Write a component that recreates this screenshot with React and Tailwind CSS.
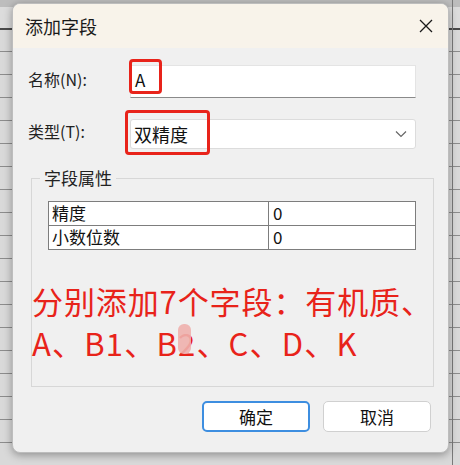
import React from 'react';

const font = { fontFamily: '"Noto Sans CJK SC", "Noto Sans", sans-serif' };

const SheetRows = () => {
  const rows = Array.from({ length: 19 });
  return (
    <div className="absolute inset-0 flex flex-col">
      <div className="h-[8px] bg-[#bdbdbd]" />
      <div className="h-[22px] bg-[#dcdcdc]" />
      {rows.map((_, i) => (
        <div
          key={i}
          className={`h-[23px] shrink-0 bg-[#d9d9d9] border-t ${i === 0 ? 'border-t-2 border-[#4a4a4a]' : 'border-[#8c8c8c]'}`}
        />
      ))}
    </div>
  );
};

const App = () => {
  return (
    <div className="relative w-[460px] h-[465px] overflow-hidden bg-[#c9c9c9]" style={font}>
      <SheetRows />
      <div className="absolute right-[7px] top-0 bottom-0 w-px bg-[#7a7a7a]" />

      {/* dialog window */}
      <div className="absolute left-[12px] top-[3px] w-[437px] h-[450px] flex flex-col rounded-[8px] overflow-hidden bg-[#f0f0f0] shadow-[0_2px_8px_rgba(0,0,0,0.35)] border border-[#bdbdbd]">
        <div className="h-[44px] shrink-0 flex items-center justify-between bg-[#f8f3ea] pl-[12px] pr-[14px]">
          <span className="text-[18px] text-[#1a1a1a]">添加字段</span>
          <svg width="16" height="16" viewBox="0 0 16 16" className="text-[#1a1a1a]">
            <path d="M2 2 L14 14 M14 2 L2 14" stroke="currentColor" strokeWidth="1.3" fill="none" />
          </svg>
        </div>

        <div className="flex flex-col pl-[15px] pr-[20px] pt-[17px]">
          <div className="flex items-center">
            <span className="w-[102px] text-[16px] text-[#222] -mt-[6px]">名称(N):</span>
            <div className="relative w-[286px] h-[33px] bg-white border border-[#e4e4e4] border-b-[#8a8a8a] flex items-center pl-[4px] pb-[4px]">
              <span className="text-[17px] text-[#111]">A</span>
              <div className="absolute left-[-2px] top-[-7px] w-[33px] h-[35px] border-[3px] border-[#e8231a] rounded-[4px]" />
            </div>
          </div>

          <div className="flex items-center mt-[21px]">
            <span className="w-[102px] text-[16px] text-[#222] -mt-[6px]">类型(T):</span>
            <div className="relative w-[286px] h-[30px] bg-white border border-[#dcdcdc] rounded-[3px] flex items-center justify-between pl-[3px] pr-[8px]">
              <span className="text-[18px] text-[#111]">双精度</span>
              <svg width="12" height="8" viewBox="0 0 12 8" className="text-[#666]">
                <path d="M1 1.5 L6 6.5 L11 1.5" stroke="currentColor" strokeWidth="1.2" fill="none" />
              </svg>
              <div className="absolute left-[-6px] top-[-10px] w-[85px] h-[45px] border-[3px] border-[#e8231a] rounded-[4px]" />
            </div>
          </div>
        </div>

        {/* group box */}
        <div className="relative ml-[18px] mt-[29px] w-[403px] h-[209px] border border-[#d7d7d7] pl-[16px] pt-[22px]">
          <span className="absolute left-[8px] top-[-14px] px-[4px] bg-[#f0f0f0] text-[17px] leading-[26px] text-[#222]">字段属性</span>
          <div className="w-[368px] border border-[#7d7d7d] bg-white text-[17px] text-[#111]">
            <div className="flex h-[24px] border-b border-[#7d7d7d]">
              <div className="w-[220px] border-r border-[#7d7d7d] pl-[3px] leading-[22px]">精度</div>
              <div className="pl-[4px] leading-[22px]">0</div>
            </div>
            <div className="flex h-[23px]">
              <div className="w-[220px] border-r border-[#7d7d7d] pl-[3px] leading-[22px]">小数位数</div>
              <div className="pl-[4px] leading-[22px]">0</div>
            </div>
          </div>
          <div className="relative -ml-[16px] mt-[30px] text-[31px] leading-[42px] text-[#e8231a]">
            <div className="tracking-[0.9px]">分别添加7个字段：有机质、</div>
            <div className="tracking-[1.2px]">A、B1、B2、C、D、K</div>
            <div className="absolute left-[146px] top-[44px] w-[13px] h-[30px] rounded-[6px] bg-[#eeb0ad] opacity-90" />
          </div>
        </div>

        <div className="flex justify-end gap-[13px] pr-[17px] mt-[14px]">
          <button className="w-[108px] h-[31px] rounded-[5px] border-2 border-[#3d8ee0] bg-white text-[17px] text-[#111]">确定</button>
          <button className="w-[108px] h-[31px] rounded-[5px] border border-[#d0d0d0] bg-white text-[17px] text-[#111]">取消</button>
        </div>
      </div>
    </div>
  );
};

export default App;
